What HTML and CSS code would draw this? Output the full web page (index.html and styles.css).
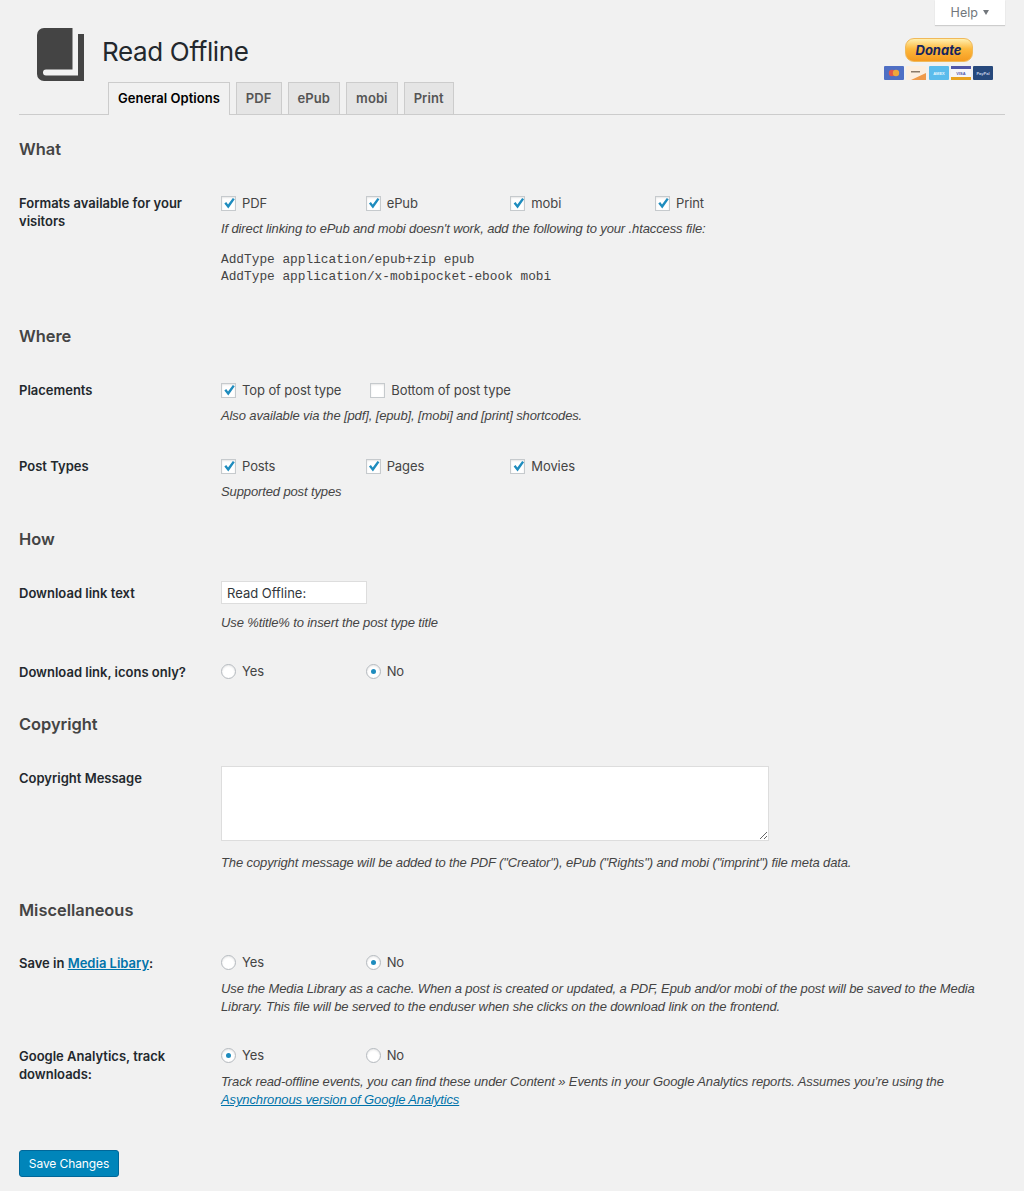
FILE: index.html
```html
<!DOCTYPE html>
<html lang="en">
<head>
    <meta charset="UTF-8">
    <meta name="viewport" content="width=device-width, initial-scale=1.0">
    <title>Read Offline</title>
    <link rel="stylesheet" href="styles.css">
</head>
<body>
    <div class="help-bar">
        <button class="help-tab" type="button">Help <span class="help-arrow"></span></button>
    </div>
    <div class="wrap">
        <div class="header">
            <svg class="book-icon" width="47" height="53" viewBox="0 0 47 53">
                <path fill="#444" d="M7 0H35.5V41.5H9a3 3 0 0 0 0 6H41V6H47V53H7a7 7 0 0 1-7-7V7a7 7 0 0 1 7-7Z"/>
            </svg>
            <h1>Read Offline</h1>
            <div class="donate">
                <a class="donate-btn" href="#">Donate</a>
                <div class="cards">
                    <svg width="20" height="14" viewBox="0 0 20 14"><rect width="20" height="14" rx="1" fill="#4f6fc4"/><circle cx="8" cy="7" r="3.2" fill="#e2574c"/><circle cx="12" cy="7" r="3.2" fill="#efa73c"/></svg>
                    <svg width="20" height="14" viewBox="0 0 20 14"><rect width="20" height="14" rx="1" fill="#fbeee0"/><path fill="#ef9a4a" d="M5 14 20 7v7Z"/><rect x="5" y="5" width="9" height="1.5" fill="#8a7a6a"/></svg>
                    <svg width="20" height="14" viewBox="0 0 20 14"><rect width="20" height="14" rx="1" fill="#5bbcec"/><text class="card-text" x="10" y="8.6" fill="#e6f6fd">AMEX</text></svg>
                    <svg width="20" height="14" viewBox="0 0 20 14"><rect width="20" height="14" rx="1" fill="#f5f5f8"/><rect width="20" height="3" fill="#4f56a8"/><rect y="11" width="20" height="3" fill="#e8a21f"/><text class="card-text" x="10" y="8.8" fill="#4f56a8">VISA</text></svg>
                    <svg width="20" height="14" viewBox="0 0 20 14"><rect width="20" height="14" rx="1" fill="#27497c"/><text class="card-text" x="10" y="8.6" fill="#c6d4e6">PayPal</text></svg>
                </div>
            </div>
        </div>
        <div class="tabs">
            <a class="tab tab-active" href="#">General Options</a>
            <a class="tab" href="#">PDF</a>
            <a class="tab" href="#">ePub</a>
            <a class="tab" href="#">mobi</a>
            <a class="tab" href="#">Print</a>
        </div>

        <form>
            <h3 class="first">What</h3>
            <div class="row">
                <div class="label">Formats available for your visitors</div>
                <div class="value">
                    <div class="options">
                        <label class="opt"><input type="checkbox" checked> PDF</label>
                        <label class="opt"><input type="checkbox" checked> ePub</label>
                        <label class="opt"><input type="checkbox" checked> mobi</label>
                        <label class="opt"><input type="checkbox" checked> Print</label>
                    </div>
                    <p class="desc">If direct linking to ePub and mobi doesn't work, add the following to your .htaccess file:</p>
                    <pre class="code">AddType application/epub+zip epub
AddType application/x-mobipocket-ebook mobi</pre>
                </div>
            </div>

            <h3>Where</h3>
            <div class="row">
                <div class="label">Placements</div>
                <div class="value">
                    <div class="options options-inline">
                        <label class="opt"><input type="checkbox" checked> Top of post type</label>
                        <label class="opt"><input type="checkbox"> Bottom of post type</label>
                    </div>
                    <p class="desc">Also available via the [pdf], [epub], [mobi] and [print] shortcodes.</p>
                </div>
            </div>
            <div class="row">
                <div class="label">Post Types</div>
                <div class="value">
                    <div class="options">
                        <label class="opt"><input type="checkbox" checked> Posts</label>
                        <label class="opt"><input type="checkbox" checked> Pages</label>
                        <label class="opt"><input type="checkbox" checked> Movies</label>
                    </div>
                    <p class="desc">Supported post types</p>
                </div>
            </div>

            <h3>How</h3>
            <div class="row row-input">
                <div class="label">Download link text</div>
                <div class="value">
                    <input class="text-input" type="text" value="Read Offline:">
                    <p class="desc desc-input">Use %title% to insert the post type title</p>
                </div>
            </div>
            <div class="row row-plain">
                <div class="label">Download link, icons only?</div>
                <div class="value">
                    <div class="options options-radio">
                        <label class="opt"><input type="radio" name="icons"> Yes</label>
                        <label class="opt"><input type="radio" name="icons" checked> No</label>
                    </div>
                </div>
            </div>

            <h3>Copyright</h3>
            <div class="row">
                <div class="label">Copyright Message</div>
                <div class="value">
                    <textarea class="text-area"></textarea>
                    <p class="desc desc-area">The copyright message will be added to the PDF ("Creator"), ePub ("Rights") and mobi ("imprint") file meta data.</p>
                </div>
            </div>

            <h3 class="misc">Miscellaneous</h3>
            <div class="row row-media">
                <div class="label">Save in <a href="#">Media Libary</a>:</div>
                <div class="value">
                    <div class="options options-radio">
                        <label class="opt"><input type="radio" name="media"> Yes</label>
                        <label class="opt"><input type="radio" name="media" checked> No</label>
                    </div>
                    <p class="desc">Use the Media Library as a cache. When a post is created or updated, a PDF, Epub and/or mobi of the post will be saved to the Media Library. This file will be served to the enduser when she clicks on the download link on the frontend.</p>
                </div>
            </div>
            <div class="row">
                <div class="label">Google Analytics, track downloads:</div>
                <div class="value">
                    <div class="options options-radio">
                        <label class="opt"><input type="radio" name="ga" checked> Yes</label>
                        <label class="opt"><input type="radio" name="ga"> No</label>
                    </div>
                    <p class="desc">Track read-offline events, you can find these under Content » Events in your Google Analytics reports. Assumes you’re using the <a href="#">Asynchronous version of Google Analytics</a></p>
                </div>
            </div>

            <button class="save" type="button">Save Changes</button>
        </form>
    </div>
</body>
</html>
```

FILE: styles.css
```css
body {
    margin: 0;
    background-color: #f1f1f1;
    color: #444;
    font-family: "Inter", "Liberation Sans", sans-serif;
    font-size: 13px;
    line-height: 18px;
}
a {
    color: #0073aa;
}
.help-bar {
    display: flex;
    justify-content: flex-end;
    padding-right: 19px;
    height: 0;
}
.help-tab {
    width: 70px;
    height: 25px;
    padding: 0;
    background-color: #fff;
    border: none;
    box-shadow: 0 1px 1px rgba(0, 0, 0, .15);
    color: #72777c;
    font: inherit;
    font-size: 12.5px;
}
.help-arrow {
    display: inline-block;
    margin-left: 2px;
    border-left: 3.5px solid transparent;
    border-right: 3.5px solid transparent;
    border-top: 5px solid #72777c;
    vertical-align: 2px;
}
.wrap {
    padding: 0 19px;
}
.header {
    display: flex;
    height: 82px;
    padding-top: 28px;
    box-sizing: border-box;
}
.book-icon {
    margin-left: 18px;
    flex: none;
}
h1 {
    margin: 5px 0 0 18px;
    color: #23282d;
    font-size: 26px;
    font-weight: 400;
    letter-spacing: -.35px;
    line-height: 38px;
}
.donate {
    margin-left: auto;
    margin-top: 10px;
    margin-right: 12px;
    width: 109px;
    display: flex;
    flex-direction: column;
    align-items: center;
}
.donate-btn {
    width: 68px;
    height: 24px;
    box-sizing: border-box;
    border: 1px solid #f0b95a;
    border-radius: 9px;
    background: linear-gradient(#fff0b0, #fdb93e 45%, #f59a1f);
    color: #14255f;
    font-size: 13px;
    font-weight: 700;
    font-style: italic;
    line-height: 22px;
    text-align: center;
    text-decoration: none;
}
.cards {
    display: flex;
    gap: 2.25px;
    margin-top: 4px;
}
.card-text {
    font-family: "Liberation Sans", sans-serif;
    font-size: 4px;
    font-weight: 700;
    text-anchor: middle;
}
.tabs {
    display: flex;
    gap: 6px;
    height: 32px;
    padding-left: 89px;
    border-bottom: 1px solid #ccc;
}
.tab {
    height: 31px;
    padding: 0 9px;
    background-color: #e5e5e5;
    border: 1px solid #ccc;
    color: #555;
    font-size: 13px;
    font-weight: 600;
    letter-spacing: .1px;
    line-height: 30px;
    text-decoration: none;
}
.tab-active {
    height: 32px;
    background-color: #f1f1f1;
    border-bottom: none;
    color: #000;
    letter-spacing: .03px;
}
h3 {
    margin: 11px 0 0;
    color: #444;
    font-size: 16.4px;
    font-weight: 600;
    line-height: 20px;
}
h3.first {
    margin-top: 24px;
}
.row {
    display: grid;
    grid-template-columns: 202px 1fr;
    padding: 15px 0 17px;
}
h3 + .row {
    margin-top: 20px;
}
h3.misc + .row {
    margin-top: 19px;
}
.row-input {
    padding-bottom: 16px;
}
.row-plain {
    padding-bottom: 22px;
}
.row-media {
    padding-bottom: 16px;
}
.label {
    color: #23282d;
    font-weight: 600;
}
.options {
    display: grid;
    grid-template-columns: repeat(4, 144.67px);
}
.options-inline {
    display: flex;
    gap: 29px;
}
.options-radio {
    margin-top: -1px;
    padding-bottom: 1px;
}
.opt {
    display: flex;
    align-items: center;
    gap: 6px;
    letter-spacing: -.1px;
}
input[type="checkbox"], input[type="radio"] {
    appearance: none;
    flex: none;
    position: relative;
    width: 15px;
    height: 15px;
    margin: 0;
    background-color: #fff;
    border: 1px solid #b4b9be;
    box-shadow: inset 0 1px 2px rgba(0, 0, 0, .1);
}
input[type="checkbox"] {
    border-color: #c6cacd;
}
input[type="radio"] {
    border-radius: 50%;
}
input[type="checkbox"]:checked::before {
    content: "";
    position: absolute;
    left: 1px;
    top: 1px;
    width: 12px;
    height: 12px;
    background-color: #1e8cbe;
    clip-path: polygon(11% 50%, 27% 38%, 42% 58%, 82% 4%, 98% 14%, 44% 92%);
}
input[type="radio"]:checked::before {
    content: "";
    position: absolute;
    left: 4px;
    top: 4px;
    width: 5px;
    height: 5px;
    border-radius: 50%;
    background-color: #1e8cbe;
}
.desc {
    margin: 8px 0 0;
    font-family: "Liberation Sans", sans-serif;
    font-style: italic;
    letter-spacing: -.12px;
}
.desc-input {
    margin-top: 10px;
}
.desc-area {
    margin-top: 13px;
}
.code {
    margin: 13px 0 13px;
    color: #444;
    font-family: "Liberation Mono", monospace;
    font-size: 12.8px;
    line-height: 17px;
}
.text-input {
    display: block;
    width: 146px;
    height: 23px;
    margin: -3px 0 0;
    padding: 0 5px;
    box-sizing: border-box;
    background-color: #fff;
    border: 1px solid #ddd;
    color: #32373c;
    font: inherit;
}
.text-area {
    display: block;
    width: 548px;
    height: 75px;
    margin: -3px 0 0;
    box-sizing: border-box;
    background-color: #fff;
    border: 1px solid #ddd;
}
.save {
    display: block;
    width: 100px;
    height: 27px;
    margin-top: 24px;
    padding: 0;
    background-color: #0085ba;
    border: 1px solid #006799;
    border-radius: 3px;
    color: #fff;
    font: inherit;
    font-size: 12px;
    letter-spacing: -.1px;
}
```
